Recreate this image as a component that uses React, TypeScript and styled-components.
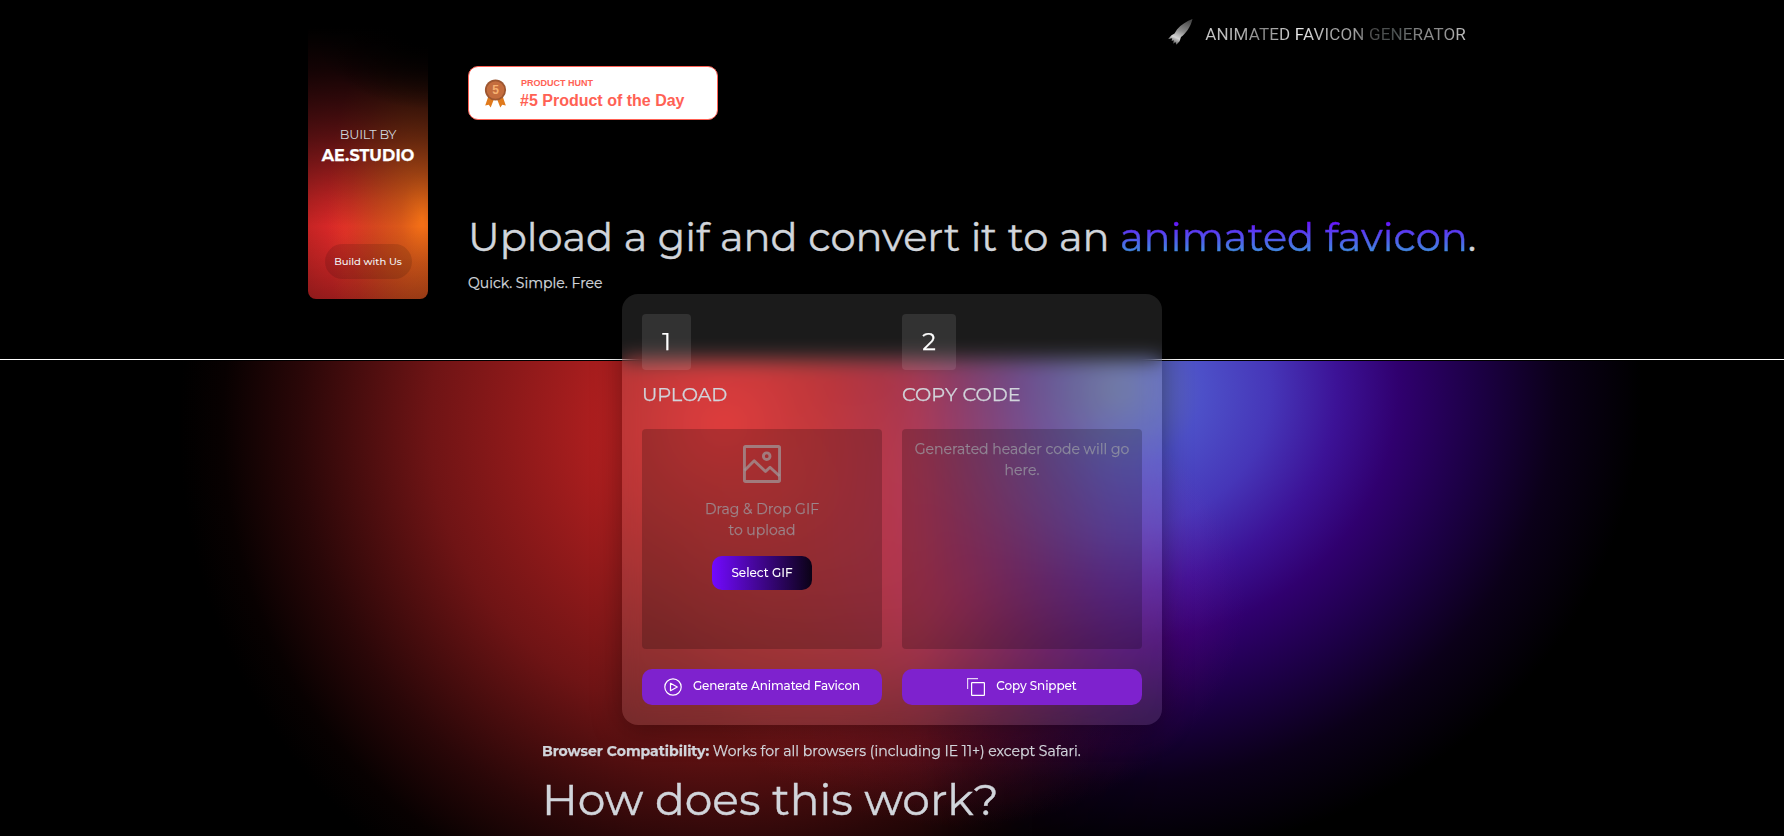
import React from 'react';
import styled, { createGlobalStyle } from 'styled-components';

const GlobalStyle = createGlobalStyle`
  *, *::before, *::after { box-sizing: border-box; }
  body {
    margin: 0;
    background: #000;
    color: #d1d5db;
    font-family: Montserrat, Inter, sans-serif;
    -webkit-text-stroke: 0.25px currentColor;
    overflow: hidden;
  }
  h1, h2, h3, p { margin: 0; font-weight: 400; }
  button { font-family: inherit; border: 0; padding: 0; -webkit-text-stroke: 0; }
  strong { -webkit-text-stroke: 0.25px currentColor; }
`;

const Page = styled.div`
  height: 836px;
  overflow: hidden;
  background: #000;
`;

const Hero = styled.header`
  width: 1168px;
  height: 359px;
  margin: 0 auto;
  padding-top: 19px;
  display: flex;
  gap: 40px;
`;

const StudioCard = styled.aside`
  flex: none;
  width: 120px;
  height: 280px;
  padding-top: 107px;
  border-radius: 8px;
  display: flex;
  flex-direction: column;
  align-items: center;
  background:
    radial-gradient(ellipse 120px 90px at 120px 0, #000 30%, rgba(0, 0, 0, 0) 100%),
    linear-gradient(180deg, #000 3%, rgba(0, 0, 0, 0.85) 18%, rgba(0, 0, 0, 0.5) 42%, rgba(0, 0, 0, 0.12) 65%, rgba(0, 0, 0, 0) 74%, rgba(0, 0, 0, 0.22) 100%),
    radial-gradient(ellipse 95px 210px at 114px 199px, #f97316 0, rgba(236, 112, 22, 0.72) 22%, rgba(222, 110, 22, 0.45) 50%, rgba(210, 100, 22, 0.2) 75%, rgba(200, 60, 22, 0) 100%),
    radial-gradient(ellipse 150px 240px at 38px 216px, #e42a2a 0, #c62424 25%, #9a1c20 55%, #5c0e14 100%);
`;

const BuiltBy = styled.span`
  font-size: 12.8px;
  line-height: 18px;
  letter-spacing: -0.2px;
  -webkit-text-stroke: 0;
`;

const StudioName = styled.strong`
  margin-top: 1px;
  font-size: 16px;
  font-weight: 700;
  line-height: 22px;
  letter-spacing: 0.1px;
  color: #fff;
`;

const BuildButton = styled.button`
  width: 87px;
  height: 35px;
  margin-top: 77px;
  padding-bottom: 1px;
  border-radius: 18px;
  background: rgba(0, 0, 0, 0.12);
  color: #f3f4f6;
  font-size: 10px;
  font-weight: 500;
`;

const HeroMain = styled.div`
  flex: 1;
  min-width: 0;
  display: flex;
  flex-direction: column;
`;

const TopRow = styled.div`
  height: 101px;
  display: flex;
  justify-content: space-between;
  align-items: flex-end;
`;

const ProductHunt = styled.a`
  width: 250px;
  height: 54px;
  padding-left: 15px;
  display: flex;
  align-items: center;
  gap: 13px;
  border: 1px solid #ff6154;
  border-radius: 10px;
  background: #fff;
  color: #ff6154;
  font-family: Helvetica, "Liberation Sans", sans-serif;
  font-weight: 700;
  -webkit-text-stroke: 0;
`;

const AwardText = styled.div`
  display: flex;
  flex-direction: column;
  padding-top: 2px;
`;

const AwardSite = styled.span`
  padding-left: 1px;
  font-size: 9px;
  line-height: 12px;
`;

const AwardTitle = styled.span`
  font-size: 16px;
  line-height: 23px;
`;

const Brand = styled.div`
  align-self: flex-start;
  margin: -3px 10px 0 0;
  display: flex;
  align-items: center;
  gap: 11px;
`;

const BrandName = styled.span`
  padding-top: 4px;
  font-family: Roboto, sans-serif;
  font-size: 17px;
  line-height: 28px;
  letter-spacing: 0.16px;
  white-space: nowrap;
  color: transparent;
  background: linear-gradient(90deg, #c8c8c8 0%, #b4b4b4 13%, #858585 22%, #c4c4c4 31%, #ededed 36%, #a8a8a8 47%, #a2a2a2 57%, #4c4c4c 64%, #4a5050 73%, #8d8d8d 83%, #8a8a8a 91%, #c4c4c4 100%);
  background-clip: text;
  -webkit-text-stroke: 0;
`;

const Headline = styled.h1`
  margin-top: 87px;
  font-size: 40px;
  line-height: 60px;
  white-space: nowrap;
  -webkit-text-stroke: 0.4px currentColor;
`;

const Accent = styled.span`
  color: transparent;
  background: linear-gradient(180deg, #6d00ff 10%, #3b9bdc 90%);
  background-clip: text;
  -webkit-text-stroke: 0.4px transparent;
`;

const Tagline = styled.p`
  margin-top: 6px;
  font-size: 14px;
  line-height: 20px;
`;

const Divider = styled.div`
  height: 2px;
  border-top: 1px solid #fff;
  background: #000;
`;

const Stage = styled.section`
  height: 475px;
  display: flex;
  flex-direction: column;
  align-items: center;
  position: relative;
`;

const Glow = styled.div`
  position: absolute;
  inset: 0;
  isolation: isolate;
  background: #000;
`;

const RedGlow = styled.div`
  position: absolute;
  inset: 0;
  background: radial-gradient(circle 545px at 724px 64px, #dc2626 0, #6f1415 54%, #2a0708 78%, #080101 92%, #000 100%);
  mask-image: linear-gradient(90deg, #000 920px, rgba(0, 0, 0, 0.15) 1110px, transparent 1200px);
`;

const CrimsonGlow = styled.div`
  position: absolute;
  inset: 0;
  mix-blend-mode: screen;
  background: radial-gradient(ellipse 290px 225px at 955px 240px, rgb(78, 10, 22), #000);
`;

const BlueGlow = styled.div`
  position: absolute;
  inset: 0;
  mix-blend-mode: screen;
  background: radial-gradient(
    ellipse 530px 470px at 1112px 28px,
    #6676a6 0, #5864bc 9.5%, #4d50c8 17%, #4636b8 30%, #3c1296 42.5%,
    #30006f 54%, #1c0045 69%, #0b0019 84%, #000 100%
  );
  mask-image: linear-gradient(
    90deg,
    rgba(0, 0, 0, 0.02) 800px, rgba(0, 0, 0, 0.17) 890px, rgba(0, 0, 0, 0.32) 940px,
    rgba(0, 0, 0, 0.56) 1010px, rgba(0, 0, 0, 0.9) 1110px, #000 1170px
  );
`;

const Panel = styled.div`
  position: relative;
  flex: none;
  width: 540px;
  height: 431px;
  margin-top: -67px;
  padding: 20px;
  display: grid;
  grid-template-columns: 240px 240px;
  gap: 20px;
  border-radius: 16px;
  background: rgba(255, 255, 255, 0.105);
  backdrop-filter: blur(10px);
  box-shadow: 0 4px 30px rgba(0, 0, 0, 0.4);
`;

const Step = styled.div`
  display: flex;
  flex-direction: column;
  align-items: flex-start;
`;

const StepNumber = styled.span<{ $width: number }>`
  width: ${(p) => p.$width}px;
  height: 56px;
  padding-bottom: 2px;
  display: flex;
  align-items: center;
  justify-content: center;
  border-radius: 4px;
  background: rgba(255, 255, 255, 0.1);
  color: #fff;
  font-size: 24px;
`;

const StepTitle = styled.h3<{ $spacing: number }>`
  margin-top: 9px;
  font-size: 19.4px;
  line-height: 30px;
  letter-spacing: ${(p) => p.$spacing}px;
`;

const DropBox = styled.div<{ $top: number }>`
  width: 240px;
  height: 220px;
  margin-top: 20px;
  padding: ${(p) => p.$top}px 10px 0;
  display: flex;
  flex-direction: column;
  align-items: center;
  border-radius: 4px;
  background: rgba(0, 0, 0, 0.2);
`;

const Hint = styled.p<{ $top?: number }>`
  margin-top: ${(p) => p.$top ?? 0}px;
  font-size: 14px;
  line-height: 21px;
  text-align: center;
  color: rgba(156, 160, 165, 0.66);
`;

const SelectButton = styled.button`
  width: 100px;
  height: 34px;
  margin-top: 15px;
  padding-bottom: 1px;
  border-radius: 10px;
  background: linear-gradient(90deg, #7209ff, #0b0216);
  color: #fff;
  font-size: 12px;
  font-weight: 500;
`;

const ActionButton = styled.button<{ $gap: number }>`
  width: 240px;
  height: 36px;
  margin-top: 20px;
  display: flex;
  align-items: center;
  justify-content: center;
  gap: ${(p) => p.$gap}px;
  border-radius: 10px;
  background: #7e22ce;
  color: #fff;
  font-size: 12px;
  font-weight: 500;
`;

const ActionLabel = styled.span`
  padding-bottom: 3px;
  letter-spacing: -0.1px;
`;

const Info = styled.div`
  position: relative;
  width: 700px;
  margin-top: 15px;
  white-space: nowrap;
`;

const Compatibility = styled.p`
  font-size: 14px;
  line-height: 22px;
  strong { font-weight: 700; }
`;

const Question = styled.h2`
  margin-top: 7px;
  font-size: 44px;
  line-height: 60px;
  -webkit-text-stroke: 0.4px currentColor;
`;

const Medal = () => (
  <svg width="23" height="29" viewBox="0 0 23 29">
    <path d="M4.5 17 1.2 26.6l3.6-.9 1.9 2.9L10 20zM18.500 17l3.300 9.600-3.600-.9-1.900 2.900L13 20z" fill="#e07a1c" />
    <circle cx="11.500" cy="11" r="10.600" fill="#9d5630" />
    <circle cx="11.500" cy="11" r="8.800" fill="#c46d3e" />
    <text x="11.500" y="15.200" textAnchor="middle" fontSize="12" fontWeight="700" fill="#f7b171">5</text>
  </svg>
);

const Rocket = () => (
  <svg width="26" height="28" viewBox="0 0 26 28">
    <defs>
      <linearGradient id="rocket" x1="0.700" y1="0" x2="0.300" y2="1">
        <stop offset="0" stopColor="#4a4a4a" />
        <stop offset="0.450" stopColor="#8a8a8a" />
        <stop offset="0.750" stopColor="#d6d6d6" />
        <stop offset="1" stopColor="#555" />
      </linearGradient>
    </defs>
    <path
      d="M24.500 1C19 3 13 6.500 9 11.500L6.500 15.500 3.500 17.200.2 21l4-.8-.6 2.800 2.200-.7-.6 3.400 2.200-1.700 1 2.800 3.200-3.600 1.400-4.100C17.500 15.500 22.500 9.500 24.500 1z"
      fill="url(#rocket)"
    />
  </svg>
);

const PictureIcon = () => (
  <svg width="38" height="38" viewBox="0 0 38 38" fill="none" stroke="rgba(160,150,152,0.75)" strokeWidth="2.900">
    <rect x="1.450" y="1.450" width="35.100" height="35.100" rx="1.200" />
    <circle cx="23.700" cy="11.200" r="3.300" />
    <path d="M1.500 25.500 11.200 15.800 22.500 26.500 27 22.200 36.500 31" strokeLinejoin="round" />
  </svg>
);

const PlayIcon = () => (
  <svg width="18" height="18" viewBox="0 0 18 18" fill="none" stroke="#fff" strokeWidth="1.200">
    <circle cx="9" cy="9" r="8.200" />
    <path d="M6.500 5.300v7.400L13.300 9z" strokeLinejoin="round" />
  </svg>
);

const CopyIcon = () => (
  <svg width="18" height="18" viewBox="0 0 18 18" fill="none" stroke="#fff" strokeWidth="1.200">
    <path d="M.6 11V.6H11" opacity="0.800" />
    <rect x="4.600" y="4.600" width="12.800" height="12.800" rx="0.500" />
  </svg>
);

export default function App() {
  return (
    <Page>
      <GlobalStyle />
      <Hero>
        <StudioCard>
          <BuiltBy>BUILT BY</BuiltBy>
          <StudioName>AE.STUDIO</StudioName>
          <BuildButton>Build with Us</BuildButton>
        </StudioCard>
        <HeroMain>
          <TopRow>
            <ProductHunt>
              <Medal />
              <AwardText>
                <AwardSite>PRODUCT HUNT</AwardSite>
                <AwardTitle>#5 Product of the Day</AwardTitle>
              </AwardText>
            </ProductHunt>
            <Brand>
              <Rocket />
              <BrandName>ANIMATED FAVICON GENERATOR</BrandName>
            </Brand>
          </TopRow>
          <Headline>
            Upload a gif and convert it to an <Accent>animated favicon</Accent>.
          </Headline>
          <Tagline>Quick. Simple. Free</Tagline>
        </HeroMain>
      </Hero>
      <Divider />
      <Stage>
        <Glow>
          <RedGlow />
          <CrimsonGlow />
          <BlueGlow />
        </Glow>
        <Panel>
          <Step>
            <StepNumber $width={49}>1</StepNumber>
            <StepTitle $spacing={-0.2}>UPLOAD</StepTitle>
            <DropBox $top={16}>
              <PictureIcon />
              <Hint $top={16}>
                Drag &amp; Drop GIF
                <br />
                to upload
              </Hint>
              <SelectButton>Select GIF</SelectButton>
            </DropBox>
            <ActionButton $gap={11}>
              <PlayIcon />
              <ActionLabel>Generate Animated Favicon</ActionLabel>
            </ActionButton>
          </Step>
          <Step>
            <StepNumber $width={54}>2</StepNumber>
            <StepTitle $spacing={0}>COPY CODE</StepTitle>
            <DropBox $top={10}>
              <Hint>Generated header code will go here.</Hint>
            </DropBox>
            <ActionButton $gap={11}>
              <CopyIcon />
              <ActionLabel>Copy Snippet</ActionLabel>
            </ActionButton>
          </Step>
        </Panel>
        <Info>
          <Compatibility>
            <strong>Browser Compatibility:</strong> Works for all browsers (including IE 11+) except Safari.
          </Compatibility>
          <Question>How does this work?</Question>
        </Info>
      </Stage>
    </Page>
  );
}
